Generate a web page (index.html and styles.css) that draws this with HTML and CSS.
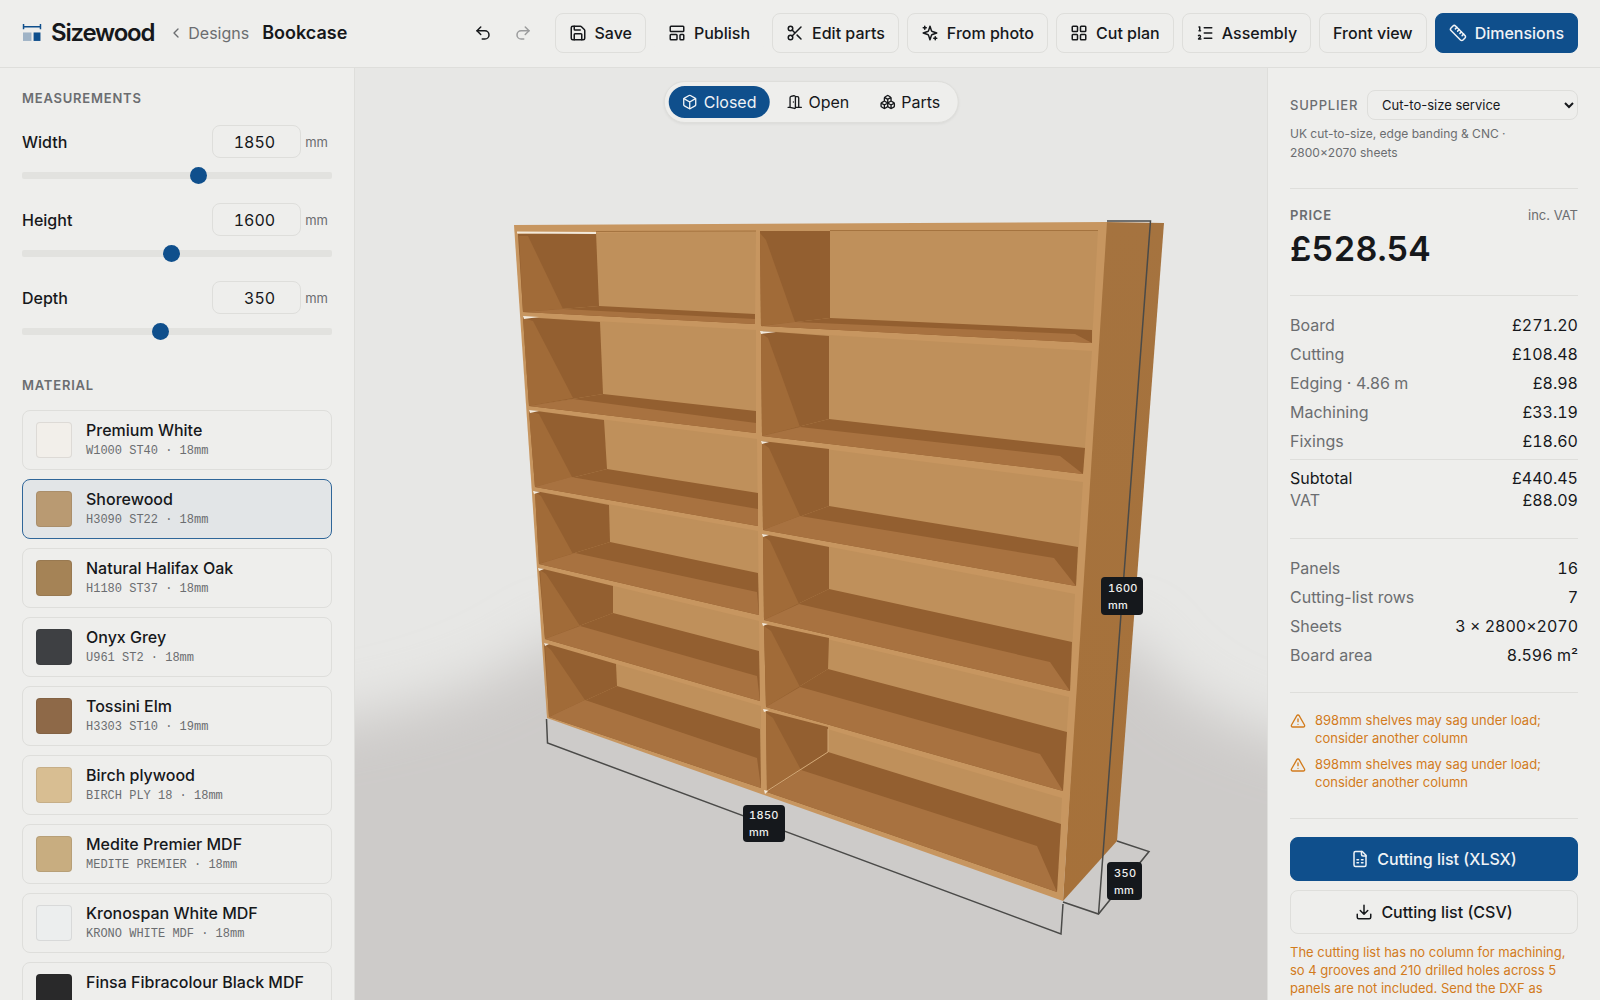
FILE: index.html
```html
<!DOCTYPE html>
<html lang="en">
<head>
<meta charset="utf-8">
<meta name="viewport" content="width=device-width, initial-scale=1">
<title>Bookcase – Sizewood</title>
<link rel="stylesheet" href="styles.css">
</head>
<body>
<header class="topbar">
  <a class="brand" href="#">
    <svg class="brand-mark" viewBox="0 0 18 17" aria-hidden="true">
      <path d="M1 0v5M17 0v5M1 2.5h16" fill="none" stroke="#0f4f8c" stroke-width="1.4"/>
      <rect x="0.5" y="8" width="8" height="8" fill="#9fb3c6"/>
      <rect x="10.5" y="8" width="6.5" height="8" fill="#0f4f8c"/>
    </svg>
    <span>Sizewood</span>
  </a>
  <a class="back" href="#">
    <svg class="icon" viewBox="0 0 24 24" aria-hidden="true"><path d="m15 18-6-6 6-6"/></svg>
    <span>Designs</span>
  </a>
  <h1 class="title">Bookcase</h1>
  <div class="actions">
    <div class="history">
      <button class="icon-btn" type="button" aria-label="Undo"><svg class="icon" viewBox="0 0 24 24"><path d="M9 14 4 9l5-5"/><path d="M4 9h10.500a5.500 5.500 0 0 1 0 11H11"/></svg></button>
      <button class="icon-btn" type="button" aria-label="Redo" disabled><svg class="icon" viewBox="0 0 24 24"><path d="m15 14 5-5-5-5"/><path d="M20 9H9.500a5.500 5.500 0 0 0 0 11H13"/></svg></button>
    </div>
    <button class="btn" type="button"><svg class="icon" viewBox="0 0 24 24"><path d="M15.200 3a2 2 0 0 1 1.400.6l3.800 3.800a2 2 0 0 1 .6 1.400V19a2 2 0 0 1-2 2H5a2 2 0 0 1-2-2V5a2 2 0 0 1 2-2z"/><path d="M17 21v-7a1 1 0 0 0-1-1H8a1 1 0 0 0-1 1v7M7 3v4a1 1 0 0 0 1 1h7"/></svg>Save</button>
    <button class="btn btn-ghost" type="button"><svg class="icon" viewBox="0 0 24 24"><rect x="3" y="3" width="18" height="7" rx="1"/><rect x="3" y="14" width="9" height="7" rx="1"/><rect x="16" y="14" width="5" height="7" rx="1"/></svg>Publish</button>
    <button class="btn" type="button"><svg class="icon" viewBox="0 0 24 24"><circle cx="6" cy="6" r="3"/><path d="M8.120 8.120 12 12M20 4 8.120 15.880"/><circle cx="6" cy="18" r="3"/><path d="M14.800 14.800 20 20"/></svg>Edit parts</button>
    <button class="btn" type="button"><svg class="icon" viewBox="0 0 24 24"><path d="m12 3-1.912 5.813a2 2 0 0 1-1.275 1.275L3 12l5.813 1.912a2 2 0 0 1 1.275 1.275L12 21l1.912-5.813a2 2 0 0 1 1.275-1.275L21 12l-5.813-1.912a2 2 0 0 1-1.275-1.275L12 3Z"/><path d="M5 3v4M19 17v4M3 5h4M17 19h4"/></svg>From photo</button>
    <button class="btn" type="button"><svg class="icon" viewBox="0 0 24 24"><rect x="3" y="3" width="7" height="7" rx="1"/><rect x="14" y="3" width="7" height="7" rx="1"/><rect x="14" y="14" width="7" height="7" rx="1"/><rect x="3" y="14" width="7" height="7" rx="1"/></svg>Cut plan</button>
    <button class="btn" type="button"><svg class="icon" viewBox="0 0 24 24"><path d="M11 5h10M11 12h10M11 19h10M4 4h1v5M4 9h2M6.500 20H3.400c0-1 2.600-1.925 2.600-3.500a1.500 1.500 0 0 0-2.600-1.020"/></svg>Assembly</button>
    <button class="btn" type="button">Front view</button>
    <button class="btn btn-primary" type="button" aria-pressed="true"><svg class="icon" viewBox="0 0 24 24"><path d="M21.300 15.300a2.400 2.400 0 0 1 0 3.400l-2.600 2.600a2.400 2.400 0 0 1-3.400 0L2.700 8.700a2.410 2.410 0 0 1 0-3.400l2.600-2.600a2.410 2.410 0 0 1 3.400 0Z"/><path d="m14.500 12.500 2-2M11.500 9.500l2-2M8.500 6.500l2-2M17.500 15.500l2-2"/></svg>Dimensions</button>
  </div>
</header>

<main class="workspace">
  <aside class="panel panel-left">
    <h2 class="label">Measurements</h2>
    <div class="measures">
      <div class="measure">
        <label for="width">Width</label>
        <span class="field"><input class="number" id="width" type="number" value="1850"><span class="unit">mm</span></span>
        <input class="slider" type="range" aria-label="Width" min="300" max="3000" value="1850">
      </div>
      <div class="measure">
        <label for="height">Height</label>
        <span class="field"><input class="number" id="height" type="number" value="1600"><span class="unit">mm</span></span>
        <input class="slider" type="range" aria-label="Height" min="300" max="3000" value="1600">
      </div>
      <div class="measure">
        <label for="depth">Depth</label>
        <span class="field"><input class="number" id="depth" type="number" value="350"><span class="unit">mm</span></span>
        <input class="slider" type="range" aria-label="Depth" min="150" max="600" value="350">
      </div>
    </div>
    <h2 class="label label-material">Material</h2>
    <div class="materials">
      <button class="material" type="button"><span class="swatch swatch-white"></span><span class="material-text"><span class="material-name">Premium White</span><span class="material-code">W1000 ST40 · 18mm</span></span></button>
      <button class="material selected" type="button" aria-pressed="true"><span class="swatch swatch-shorewood"></span><span class="material-text"><span class="material-name">Shorewood</span><span class="material-code">H3090 ST22 · 18mm</span></span></button>
      <button class="material" type="button"><span class="swatch swatch-oak"></span><span class="material-text"><span class="material-name">Natural Halifax Oak</span><span class="material-code">H1180 ST37 · 18mm</span></span></button>
      <button class="material" type="button"><span class="swatch swatch-onyx"></span><span class="material-text"><span class="material-name">Onyx Grey</span><span class="material-code">U961 ST2 · 18mm</span></span></button>
      <button class="material" type="button"><span class="swatch swatch-elm"></span><span class="material-text"><span class="material-name">Tossini Elm</span><span class="material-code">H3303 ST10 · 19mm</span></span></button>
      <button class="material" type="button"><span class="swatch swatch-birch"></span><span class="material-text"><span class="material-name">Birch plywood</span><span class="material-code">BIRCH PLY 18 · 18mm</span></span></button>
      <button class="material" type="button"><span class="swatch swatch-medite"></span><span class="material-text"><span class="material-name">Medite Premier MDF</span><span class="material-code">MEDITE PREMIER · 18mm</span></span></button>
      <button class="material" type="button"><span class="swatch swatch-krono"></span><span class="material-text"><span class="material-name">Kronospan White MDF</span><span class="material-code">KRONO WHITE MDF · 18mm</span></span></button>
      <button class="material" type="button"><span class="swatch swatch-black"></span><span class="material-text"><span class="material-name">Finsa Fibracolour Black MDF</span><span class="material-code"></span></span></button>
    </div>
  </aside>

  <section class="stage" aria-label="3D preview">
    <svg class="scene" viewBox="355 68 912 932" preserveAspectRatio="xMidYMid slice" role="img" aria-label="Bookcase, 1850 by 1600 by 350 mm">
      <defs>
        <filter id="soft" x="-20%" y="-30%" width="140%" height="160%"><feGaussianBlur stdDeviation="28"/></filter>
        <linearGradient id="side" x1="0" y1="0" x2="0" y2="1"><stop offset="0" stop-color="#a5733f"/><stop offset="1" stop-color="#a6713a"/></linearGradient>
      </defs>
      <path class="floor" filter="url(#soft)" d="M250 735C380 715 470 700 560 635H1130C1175 700 1220 725 1370 760V1120H250Z"/>

      <polygon class="outer-side" points="1104,222 1164,223 1117,841 1063,901"/>
      <polygon class="frame" points="514,225 1107,222 1063,901 547,718"/>

      <!-- left bay, top to bottom -->
      <polygon class="back" points="518,234 756,231 755,324 523,312"/>
      <polygon class="shade" points="518,234 596,232 599,306 523,312"/>
      <polygon class="lit" points="519,236 528,236 563,309 523,312"/>
      <polygon class="shade" points="523,312 599,306 755,314 755,324"/>
      <polygon class="top-lit" points="523,312 563,309 755,319 755,324"/>

      <polygon class="back" points="523,317 756,330 756,433 529,406"/>
      <polygon class="shade" points="523,317 600,322 603,394 529,406"/>
      <polygon class="lit" points="523,318 533,321 573,398 529,406"/>
      <polygon class="shade" points="529,406 603,394 756,411 756,433"/>
      <polygon class="top-lit" points="529,406 573,399 756,423 756,433"/>

      <polygon class="back" points="529,410 757,439 758,526 535,487"/>
      <polygon class="shade" points="529,410 604,420 607,469 535,487"/>
      <polygon class="lit" points="529,411 539,414 572,477 535,487"/>
      <polygon class="shade" points="535,487 607,469 758,493 758,526"/>
      <polygon class="top-lit" points="535,487 571,477 758,509 758,526"/>

      <polygon class="back" points="535,491 758,531 759,615 539,564"/>
      <polygon class="shade" points="535,491 609,505 610,542 539,564"/>
      <polygon class="lit" points="535,492 541,496 573,554 539,564"/>
      <polygon class="shade" points="539,564 610,542 758,573 759,615"/>
      <polygon class="top-lit" points="539,564 575,553 757,592 759,615"/>

      <polygon class="back" points="539,568 759,621 760,701 545,639"/>
      <polygon class="shade" points="539,568 613,586 613,613 545,639"/>
      <polygon class="lit" points="540,570 546,574 580,626 545,639"/>
      <polygon class="shade" points="545,639 613,613 759,651 760,701"/>
      <polygon class="top-lit" points="545,639 580,626 757,676 760,701"/>

      <polygon class="back" points="544,643 761,706 761,788 549,717"/>
      <polygon class="shade" points="544,643 616,664 617,686 549,717"/>
      <polygon class="lit" points="545,645 551,650 585,700 549,717"/>
      <polygon class="shade" points="549,717 617,686 760,729 761,788"/>
      <polygon class="top-lit" points="549,717 585,700 757,758 761,788"/>

      <!-- right bay, top to bottom -->
      <polygon class="back" points="760,231 1098,230 1092,343 761,326"/>
      <polygon class="shade" points="760,231 830,231 830,318 761,326"/>
      <polygon class="lit" points="760,233 766,240 795,322 761,326"/>
      <polygon class="shade" points="761,326 830,318 1092,330 1092,343"/>
      <polygon class="top-lit" points="761,326 795,322 1075,334 1092,343"/>

      <polygon class="back" points="761,331 1092,351 1083,474 762,436"/>
      <polygon class="shade" points="761,331 829,336 829,419 762,436"/>
      <polygon class="lit" points="761,333 768,338 800,427 762,436"/>
      <polygon class="shade" points="762,436 829,419 1085,448 1083,474"/>
      <polygon class="top-lit" points="762,436 800,427 1060,456 1083,474"/>

      <polygon class="back" points="762,441 1083,482 1076,586 763,530"/>
      <polygon class="shade" points="762,441 829,449 829,506 763,530"/>
      <polygon class="lit" points="762,443 769,448 800,516 763,530"/>
      <polygon class="shade" points="763,530 829,506 1078,547 1076,586"/>
      <polygon class="top-lit" points="763,530 800,516 1054,558 1076,586"/>

      <polygon class="back" points="763,534 1075,594 1070,691 764,620"/>
      <polygon class="shade" points="763,534 829,547 829,589 764,620"/>
      <polygon class="lit" points="763,536 770,541 799,604 764,620"/>
      <polygon class="shade" points="764,620 829,589 1072,642 1070,691"/>
      <polygon class="top-lit" points="764,620 799,604 1050,662 1070,691"/>

      <polygon class="back" points="764,624 1069,697 1063,791 766,707"/>
      <polygon class="shade" points="764,624 829,638 828,669 766,707"/>
      <polygon class="lit" points="764,626 771,631 800,687 766,707"/>
      <polygon class="shade" points="766,707 828,669 1067,732 1063,791"/>
      <polygon class="top-lit" points="766,707 800,687 1040,754 1063,791"/>

      <polygon class="back" points="766,711 1062,798 1057,892 767,792"/>
      <polygon class="shade" points="766,711 828,727 828,752 767,792"/>
      <polygon class="lit" points="766,713 773,718 801,770 767,792"/>
      <polygon class="shade" points="767,792 828,752 1061,824 1057,892"/>
      <polygon class="top-lit" points="767,792 801,770 1037,846 1057,892"/>

      <path class="seam" d="M596 231.500 756 231M830 230.500H1098"/>
      <path class="joint" d="M767 791 828 752V729"/>
      <path class="glint-line" d="M517 232.500 596 233"/>
      <path class="glint" d="M523 316l16 1-15 2zM529 410l10 1-9 2zM533 491l7 1-6 2zM538 568l6 1-5 2zM544 643l5 1-4 2zM760 331l16 1-15 2zM761 441l8 1-7 2zM762 534l7 1-6 2zM762 623l6 1-5 2zM763 709l6 1-5 2zM764 790l4 1-3 3z"/>

      <g class="dims">
        <path d="M546.500 719 547.500 743 1061 934 1063 904"/>
        <path d="M1063 902 1098.500 914 1149 851.500 1117 841"/>
        <path d="M1107 221H1150.500L1098.500 914"/>
      </g>
      <g class="tag"><rect x="743" y="805" width="42" height="37" rx="4"/><text x="749" y="819">1850</text><text x="749" y="836">mm</text></g>
      <g class="tag"><rect x="1101" y="577" width="42" height="38" rx="4"/><text x="1108" y="592">1600</text><text x="1108" y="609">mm</text></g>
      <g class="tag"><rect x="1107" y="862" width="35" height="38" rx="4"/><text x="1114" y="877">350</text><text x="1114" y="894">mm</text></g>
    </svg>
    <div class="modes" role="group" aria-label="View mode">
      <button class="mode active" type="button" aria-pressed="true"><svg class="icon" viewBox="0 0 24 24"><path d="M21 8a2 2 0 0 0-1-1.730l-7-4a2 2 0 0 0-2 0l-7 4A2 2 0 0 0 3 8v8a2 2 0 0 0 1 1.730l7 4a2 2 0 0 0 2 0l7-4A2 2 0 0 0 21 16Z"/><path d="m3.300 7 8.700 5 8.700-5M12 22V12"/></svg>Closed</button>
      <button class="mode" type="button"><svg class="icon" viewBox="0 0 24 24"><path d="M13 4h3a2 2 0 0 1 2 2v14M2 20h3M13 20h9M10 12v.010M13 4.562v16.157a1 1 0 0 1-1.242.97L5 20V5.562a2 2 0 0 1 1.515-1.940l4-1A2 2 0 0 1 13 4.561Z"/></svg>Open</button>
      <button class="mode" type="button"><svg class="icon" viewBox="0 0 24 24"><path d="M2.970 12.920A2 2 0 0 0 2 14.630v3.240a2 2 0 0 0 .97 1.710l3 1.800a2 2 0 0 0 2.060 0L12 19v-5.500l-5-3-4.030 2.420ZM7 16.500l-4.740-2.850M7 16.500l5-3M7 16.500v5.170M12 13.500V19l3.970 2.380a2 2 0 0 0 2.060 0l3-1.800a2 2 0 0 0 .97-1.710v-3.240a2 2 0 0 0-.97-1.710L17 10.500l-5 3ZM17 16.500l-5-3M17 16.500l4.740-2.850M17 16.500v5.170M7.970 4.420A2 2 0 0 0 7 6.130v4.370l5 3 5-3V6.130a2 2 0 0 0-.97-1.710l-3-1.800a2 2 0 0 0-2.060 0l-3 1.800ZM12 8 7.260 5.150M12 8l4.740-2.850M12 13.500V8"/></svg>Parts</button>
    </div>
  </section>

  <aside class="panel panel-right">
    <section class="block block-supplier">
      <div class="supplier">
        <label class="label" for="supplier">Supplier</label>
        <select class="select" id="supplier"><option>Cut-to-size service</option></select>
      </div>
      <p class="hint">UK cut-to-size, edge banding &amp; CNC · 2800×2070 sheets</p>
    </section>
    <section class="block block-price">
      <div class="price-head"><h2 class="label">Price</h2><span class="vat-note">inc. VAT</span></div>
      <p class="price">£528.54</p>
    </section>
    <section class="block block-costs">
      <dl class="rows">
        <div class="row"><dt>Board</dt><dd>£271.20</dd></div>
        <div class="row"><dt>Cutting</dt><dd>£108.48</dd></div>
        <div class="row"><dt>Edging · 4.86 m</dt><dd>£8.98</dd></div>
        <div class="row"><dt>Machining</dt><dd>£33.19</dd></div>
        <div class="row"><dt>Fixings</dt><dd>£18.60</dd></div>
      </dl>
      <dl class="totals">
        <div class="row row-strong"><dt>Subtotal</dt><dd>£440.45</dd></div>
        <div class="row"><dt>VAT</dt><dd>£88.09</dd></div>
      </dl>
    </section>
    <section class="block block-stats">
      <dl class="rows">
        <div class="row"><dt>Panels</dt><dd>16</dd></div>
        <div class="row"><dt>Cutting-list rows</dt><dd>7</dd></div>
        <div class="row"><dt>Sheets</dt><dd>3 × 2800×2070</dd></div>
        <div class="row"><dt>Board area</dt><dd>8.596 m²</dd></div>
      </dl>
    </section>
    <section class="block block-warnings">
      <p class="warning"><svg class="icon" viewBox="0 0 24 24" aria-hidden="true"><path d="m21.730 18-8-14a2 2 0 0 0-3.480 0l-8 14A2 2 0 0 0 4 21h16a2 2 0 0 0 1.730-3M12 9v4M12 17h.010"/></svg><span>898mm shelves may sag under load; consider another column</span></p>
      <p class="warning"><svg class="icon" viewBox="0 0 24 24" aria-hidden="true"><path d="m21.730 18-8-14a2 2 0 0 0-3.480 0l-8 14A2 2 0 0 0 4 21h16a2 2 0 0 0 1.730-3M12 9v4M12 17h.010"/></svg><span>898mm shelves may sag under load; consider another column</span></p>
    </section>
    <section class="exports">
      <button class="btn btn-wide btn-primary" type="button"><svg class="icon" viewBox="0 0 24 24"><path d="M15 2H6a2 2 0 0 0-2 2v16a2 2 0 0 0 2 2h12a2 2 0 0 0 2-2V7Z"/><path d="M14 2v4a2 2 0 0 0 2 2h4M8 13h2M14 13h2M8 17h2M14 17h2"/></svg>Cutting list (XLSX)</button>
      <button class="btn btn-wide" type="button"><svg class="icon" viewBox="0 0 24 24"><path d="M21 15v4a2 2 0 0 1-2 2H5a2 2 0 0 1-2-2v-4M7 10l5 5 5-5M12 15V3"/></svg>Cutting list (CSV)</button>
      <p class="note">The cutting list has no column for machining, so 4 grooves and 210 drilled holes across 5 panels are not included. Send the DXF as</p>
    </section>
  </aside>
</main>
</body>
</html>
```
FILE: styles.css
```css
:root {
  --bg: #eeeeec;
  --line: #dededb;
  --text: #16181b;
  --muted: #6b6d70;
  --blue: #0f4f8c;
  --amber: #d27b1c;
}

* { box-sizing: border-box; }

body {
  margin: 0;
  height: 100vh;
  display: flex;
  flex-direction: column;
  overflow: hidden;
  background: var(--bg);
  color: var(--text);
  font: 400 16px/20px Inter, "Liberation Sans", sans-serif;
}

h1, h2, p, dl, dd { margin: 0; }
button, input, select { font: inherit; color: inherit; }
a { color: inherit; text-decoration: none; }

.icon {
  flex: none;
  width: 18px;
  height: 18px;
  fill: none;
  stroke: currentColor;
  stroke-width: 2;
  stroke-linecap: round;
  stroke-linejoin: round;
}

/* Top bar */
.topbar {
  flex: none;
  display: flex;
  align-items: center;
  height: 68px;
  padding: 0 22px 1px;
  border-bottom: 1px solid var(--line);
}
.brand {
  display: flex;
  align-items: center;
  gap: 9px;
  font-size: 24px;
  font-weight: 600;
  letter-spacing: -0.05em;
}
.brand-mark { width: 20px; height: 18px; }
.back {
  display: flex;
  align-items: center;
  gap: 4px;
  margin-left: 14px;
  color: var(--muted);
}
.back .icon { width: 16px; height: 16px; }
.title { margin-left: 13px; font-size: 18px; font-weight: 600; }
.actions { display: flex; align-items: center; gap: 8px; margin-left: auto; }
.history { display: flex; margin-right: 4px; }
.icon-btn {
  display: grid;
  place-items: center;
  width: 40px;
  height: 40px;
  padding: 0;
  border: 0;
  background: none;
}
.icon-btn:disabled { color: #9b9c9d; }

.btn {
  display: flex;
  align-items: center;
  justify-content: center;
  gap: 8px;
  height: 40px;
  padding: 0 13px;
  border: 1px solid var(--line);
  border-radius: 8px;
  background: var(--bg);
  font-weight: 500;
  white-space: nowrap;
}
.btn-ghost { border-color: transparent; }
.btn-primary { border-color: var(--blue); background: var(--blue); color: #f0f3f6; }
.btn-wide { width: 100%; height: 44px; }

/* Workspace */
.workspace {
  flex: 1;
  min-height: 0;
  display: grid;
  grid-template-columns: 355px minmax(0, 1fr) 333px;
}
.panel { overflow: hidden; padding: 20px 22px; }
.panel-left { border-right: 1px solid var(--line); }
.panel-right { border-left: 1px solid var(--line); }

.label {
  color: var(--muted);
  font-size: 13px;
  font-weight: 600;
  line-height: 20px;
  letter-spacing: 0.06em;
  text-transform: uppercase;
}

.measures { display: grid; gap: 19px; margin-top: 17px; }
.measure {
  display: grid;
  grid-template-columns: 1fr auto;
  align-items: center;
  row-gap: 9px;
  font-weight: 500;
}
.field { display: flex; align-items: center; gap: 4px; padding-right: 4px; }
.number {
  width: 89px;
  height: 33px;
  padding: 0 10px;
  border: 1px solid var(--line);
  border-radius: 8px;
  background: transparent;
  font-weight: 400;
  font-variant-numeric: tabular-nums;
  text-align: right;
}
.unit { color: var(--muted); font-size: 13px; font-weight: 400; }
.slider {
  grid-column: 1 / -1;
  appearance: none;
  width: 100%;
  height: 17px;
  margin: 0;
  background: none;
}
.slider::-webkit-slider-runnable-track { height: 7px; border-radius: 2px; background: #e2e2df; }
.slider::-webkit-slider-thumb {
  appearance: none;
  width: 17px;
  height: 17px;
  margin-top: -5px;
  border-radius: 50%;
  background: var(--blue);
}

.label-material { margin-top: 35px; }
.materials { display: grid; gap: 9px; margin-top: 15px; }
.material {
  display: flex;
  align-items: center;
  gap: 14px;
  height: 60px;
  padding: 0 13px;
  border: 1px solid var(--line);
  border-radius: 8px;
  background: transparent;
  text-align: left;
}
.material.selected { border-color: #2f6699; background: #e2e5e7; }
.swatch { flex: none; width: 36px; height: 36px; border: 1px solid rgba(40, 40, 40, 0.1); border-radius: 4px; }
.swatch-white { background: #f2efea; }
.swatch-shorewood { background: #b99a72; }
.swatch-oak { background: #a58356; }
.swatch-onyx { background: #3e4043; }
.swatch-elm { background: #8e6948; }
.swatch-birch { background: #d8be92; }
.swatch-medite { background: #c8ad80; }
.swatch-krono { background: #eceeee; }
.swatch-black { background: #29292a; }
.material-text { display: grid; grid-template-rows: 22px 20px; }
.material-name { font-weight: 500; line-height: 22px; }
.material-code {
  color: var(--muted);
  font: 400 12px/20px "Liberation Mono", monospace;
}

/* Preview */
.stage { position: relative; overflow: hidden; background: #e7e7e5; }
.scene { display: block; width: 100%; height: 100%; }
.floor { fill: #cdcbc9; }
.frame { fill: #c79660; }
.outer-side { fill: url(#side); }
.back { fill: #bf905b; }
.shade { fill: #935f30; }
.lit { fill: #a16b38; }
.top-lit { fill: #a87240; }
.seam { stroke: #a4733f; fill: none; }
.joint { stroke: #d2a877; fill: none; }
.glint { fill: #f3eadc; }
.glint-line { stroke: #f3eadc; stroke-width: 2; }
.dims path { fill: none; stroke: #4a4a48; stroke-width: 1.5; }
.tag rect { fill: #15181c; }
.tag text { fill: #eeeeec; font-size: 11px; font-weight: 500; letter-spacing: 0.03em; font-variant-numeric: tabular-nums; }

.modes {
  position: absolute;
  top: 13px;
  left: 50%;
  transform: translateX(-50%);
  display: flex;
  gap: 4px;
  padding: 4px;
  border: 1px solid var(--line);
  border-radius: 21px;
  background: var(--bg);
  box-shadow: 0 1px 3px rgba(0, 0, 0, 0.06);
}
.mode {
  display: flex;
  align-items: center;
  gap: 6px;
  height: 32px;
  padding: 0 13px;
  border: 0;
  border-radius: 16px;
  background: none;
}
.mode .icon { width: 16px; height: 16px; }
.mode.active { background: var(--blue); color: #f0f3f6; }

/* Summary */
.block { border-bottom: 1px solid var(--line); }
.block-supplier { padding: 2px 0 26px; }
.supplier { display: flex; align-items: center; gap: 9px; }
.supplier .label { font-weight: 500; }
.select {
  flex: 1;
  min-width: 0;
  height: 30px;
  padding: 0 10px;
  border: 1px solid var(--line);
  border-radius: 8px;
  background: transparent;
  font-size: 13px;
}
.hint { margin-top: 4px; padding-right: 24px; color: var(--muted); font-size: 12px; line-height: 19px; }
.block-price { padding: 16px 0 26px; }
.price-head { display: flex; justify-content: space-between; }
.vat-note { color: var(--muted); font-size: 13px; }
.price { margin-top: 4px; font-size: 34px; font-weight: 600; line-height: 40px; font-variant-numeric: tabular-nums; }
.row { display: flex; justify-content: space-between; }
.rows .row { line-height: 29px; }
.row dt { color: var(--muted); }
.row dd { font-variant-numeric: tabular-nums; }
.row-strong dt { color: var(--text); }
.block-costs { padding: 15px 0 27px; }
.totals { margin-top: 3px; padding-top: 7px; border-top: 1px solid var(--line); line-height: 22px; }
.block-stats { padding: 15px 0 22px; }
.block-warnings { display: grid; gap: 8px; padding: 18px 0 27px; }
.warning { display: flex; gap: 9px; color: var(--amber); font-size: 13px; line-height: 18px; }
.warning .icon { width: 16px; height: 16px; margin-top: 2px; }
.exports { display: grid; gap: 9px; padding-top: 18px; }
.note { color: var(--amber); font-size: 13px; line-height: 18px; }
```
